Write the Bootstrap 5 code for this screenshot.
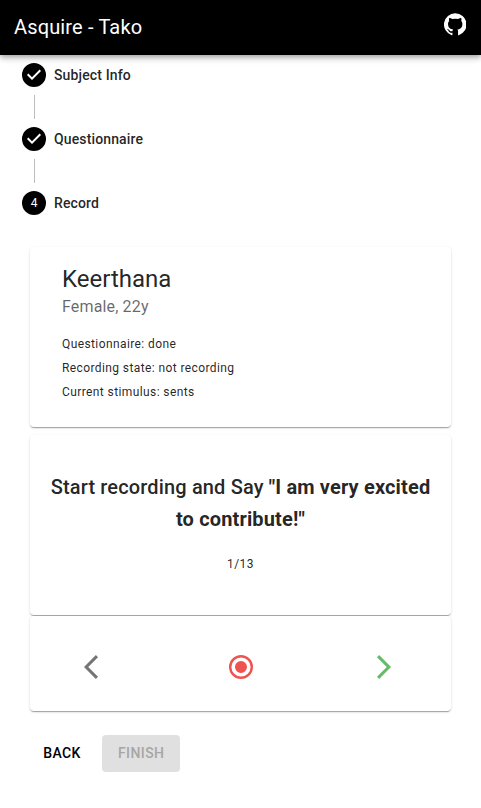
<!DOCTYPE html>
<html lang="en">
<head>
<meta charset="utf-8">
<meta name="viewport" content="width=device-width, initial-scale=1">
<title>Asquire - Tako</title>
<link href="https://cdn.jsdelivr.net/npm/bootstrap@5.3.0/dist/css/bootstrap.min.css" rel="stylesheet">
<style>
body{font-family:Roboto,"Liberation Sans",sans-serif;color:rgba(0,0,0,.87);background:#fff}
svg{display:block;fill:currentColor}
.app-bar{height:55px;padding:0 15px 0 14px;background:#000;color:#fff;box-shadow:0 2px 4px -1px rgba(0,0,0,.2),0 4px 5px 0 rgba(0,0,0,.14),0 1px 10px 0 rgba(0,0,0,.12)}
.app-title{font-size:20px;line-height:32px;letter-spacing:.0075em;color:#fff;margin-bottom:2px}
.git-link{margin-bottom:6px}
.stepper{padding:8px 22px 0}
.step{height:24px;font-size:14px;font-weight:500;line-height:20px;letter-spacing:.00938em}
.step svg{color:#000}
.step-num{fill:#fff;font-size:12px;font-weight:400;letter-spacing:0}
.step-line{width:1px;height:24px;margin:8px 0 8px 12px;background:#bdbdbd}
.content{padding:32px 30px 0}
.panel{--bs-card-border-width:0;--bs-card-border-radius:4px;--bs-card-color:rgba(0,0,0,.87);box-shadow:0 2px 1px -1px rgba(0,0,0,.2),0 1px 1px 0 rgba(0,0,0,.14),0 1px 3px 0 rgba(0,0,0,.12)}
.panel-tall{height:180px}
.panel-controls{height:95px;margin-top:1px}
.subject{padding:16px 32px}
.subject-name{font-size:24px;font-weight:400;line-height:32px;letter-spacing:0}
.subject-meta{font-size:16px;line-height:24px;letter-spacing:.00938em;color:rgba(0,0,0,.6);margin-bottom:13px}
.caption-text{font-size:12px;line-height:24px;letter-spacing:.03333em}
.prompt{padding:36px 16px 0}
.prompt-text{font-size:20px;font-weight:500;line-height:32px;letter-spacing:.0075em;margin-bottom:17px}
.controls{padding:7px 60px 0 54px}
.icon-btn{border:0;background:none;padding:0}
.c-prev{color:#757575}.c-rec{color:#ef5350;margin-left:6px}.c-next{color:#66bb6a}
.actions{margin-top:24px}
.action{--bs-btn-font-size:14px;--bs-btn-font-weight:500;--bs-btn-line-height:24.5px;--bs-btn-border-width:0;--bs-btn-border-radius:4px;--bs-btn-padding-y:6px;--bs-btn-padding-x:8px;--bs-btn-color:#000;letter-spacing:.02857em;min-width:64px}
.action-finish{--bs-btn-padding-x:16px;--bs-btn-disabled-bg:#e0e0e0;--bs-btn-disabled-color:#a6a6a6;--bs-btn-disabled-opacity:1}
</style>
<script src="https://cdn.jsdelivr.net/npm/bootstrap@5.3.0/dist/js/bootstrap.bundle.min.js"></script>
</head>
<body>
<header class="app-bar d-flex align-items-center justify-content-between">
  <span class="app-title">Asquire - Tako</span>
  <a class="git-link text-white" href="#" aria-label="GitHub"><svg width="22.5" height="22.5" viewBox="0 0 24 24"><path d="M12 .3a12 12 0 0 0-3.8 23.4c.6.1.8-.3.8-.6v-2c-3.3.7-4-1.6-4-1.6-.6-1.4-1.4-1.8-1.4-1.8-1-.7.1-.7.1-.7 1.2 0 1.9 1.2 1.9 1.2 1 1.8 2.8 1.3 3.5 1 0-.8.4-1.3.7-1.6-2.7-.3-5.5-1.3-5.5-6 0-1.2.5-2.3 1.3-3.1-.2-.4-.6-1.6 0-3.2 0 0 1-.3 3.4 1.2a11.5 11.5 0 0 1 6 0c2.3-1.5 3.3-1.2 3.3-1.2.6 1.6.2 2.8 0 3.2.9.8 1.3 1.9 1.3 3.2 0 4.6-2.8 5.6-5.5 5.9.5.4.9 1 .9 2.2v3.3c0 .3.1.7.8.6A12 12 0 0 0 12 .3"/></svg></a>
</header>
<main>
  <div class="stepper">
    <div class="step d-flex align-items-center gap-2"><svg width="24" height="24" viewBox="0 0 24 24"><path d="M12 0a12 12 0 1 0 0 24 12 12 0 0 0 0-24zm-2 17l-5-5 1.4-1.4 3.6 3.6 7.6-7.6L19 8l-9 9z"/></svg><span>Subject Info</span></div>
    <div class="step-line"></div>
    <div class="step d-flex align-items-center gap-2"><svg width="24" height="24" viewBox="0 0 24 24"><path d="M12 0a12 12 0 1 0 0 24 12 12 0 0 0 0-24zm-2 17l-5-5 1.4-1.4 3.6 3.6 7.6-7.6L19 8l-9 9z"/></svg><span>Questionnaire</span></div>
    <div class="step-line"></div>
    <div class="step d-flex align-items-center gap-2"><svg width="24" height="24" viewBox="0 0 24 24"><circle cx="12" cy="12" r="12"/><text class="step-num" x="12" y="16" text-anchor="middle">4</text></svg><span>Record</span></div>
  </div>
  <div class="content">
    <section class="card panel panel-tall mb-2"><div class="card-body subject">
      <h2 class="subject-name mb-0">Keerthana</h2>
      <p class="subject-meta">Female, 22y</p>
      <div class="caption-text">Questionnaire: done</div>
      <div class="caption-text">Recording state: not recording</div>
      <div class="caption-text">Current stimulus: sents</div>
    </div></section>
    <section class="card panel panel-tall"><div class="card-body prompt text-center">
      <h6 class="prompt-text">Start recording and Say <b>"I am very excited to contribute!"</b></h6>
      <div class="caption-text">1/13</div>
    </div></section>
    <section class="card panel panel-controls"><div class="card-body controls d-flex align-items-center justify-content-between">
      <button class="icon-btn c-prev" aria-label="Previous"><svg width="14" height="24" viewBox="0 2.1 11.67 19.8"><path d="M11.67 3.87 9.9 2.1 0 12l9.9 9.9 1.77-1.77L3.54 12z"/></svg></button>
      <button class="icon-btn c-rec" aria-label="Record"><svg width="24" height="24" viewBox="2 2 20 20"><path d="M12 7a5 5 0 1 0 0 10 5 5 0 0 0 0-10zm0-5a10 10 0 1 0 0 20 10 10 0 0 0 0-20zm0 18a8 8 0 1 1 0-16 8 8 0 0 1 0 16z"/></svg></button>
      <button class="icon-btn c-next" aria-label="Next"><svg width="14" height="24" viewBox="0 2.1 11.67 19.8"><path d="M0 3.87 1.77 2.1l9.9 9.9-9.9 9.9L0 20.13 8.13 12z"/></svg></button>
    </div></section>
    <div class="actions d-flex gap-2">
      <button class="btn action">BACK</button>
      <button class="btn action action-finish" disabled>FINISH</button>
    </div>
  </div>
</main>
</body>
</html>
